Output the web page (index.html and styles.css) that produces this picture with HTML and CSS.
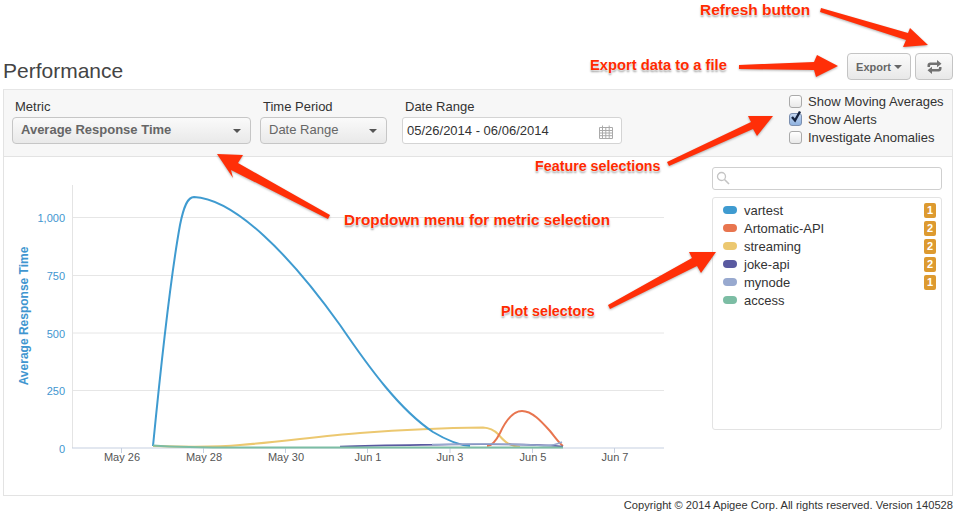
FILE: index.html
```html
<!DOCTYPE html>
<html lang="en">
<head>
  <meta charset="UTF-8">
  <title>Performance</title>
  <link rel="stylesheet" href="styles.css">
</head>
<body>
  <div class="page">
    <div class="header">
      <h1>Performance</h1>
      <div class="actions">
        <button class="btn export">Export <span class="caret small"></span></button>
        <button class="btn refresh">
          <svg width="15" height="14" viewBox="0 0 15 14"><path d="M0.5 7V5.2C0.5 3.6 1.7 2.5 3.2 2.5H10V0L14.5 3.7L10 7.2V5H4.2C3.4 5 3 5.4 3 6.2V7ZM14.5 7V8.8C14.5 10.4 13.3 11.5 11.8 11.5H5V14L0.5 10.3L5 6.8V9H10.8C11.6 9 12 8.6 12 7.8V7Z" fill="#707070"/></svg>
        </button>
      </div>
    </div>

    <div class="panel">
      <div class="toolbar">
        <div class="field metric">
          <label>Metric</label>
          <div class="select strong">Average Response Time <span class="caret"></span></div>
        </div>
        <div class="field period">
          <label>Time Period</label>
          <div class="select">Date Range <span class="caret"></span></div>
        </div>
        <div class="field range">
          <label>Date Range</label>
          <div class="dateinput">05/26/2014 - 06/06/2014
            <svg width="14" height="14" viewBox="0 0 14 14"><path d="M0.5 2.5H13.5V13.5H0.5ZM0.5 5.5H13.5M0.5 8H13.5M0.5 10.7H13.5M3.5 2.5V13.5M6.8 2.5V13.5M10.2 2.5V13.5M3.5 0.5V2.5M10.2 0.5V2.5" fill="none" stroke="#aaa"/></svg>
          </div>
        </div>
        <div class="features">
          <div class="feature"><span class="check"></span>Show Moving Averages</div>
          <div class="feature"><span class="check on"><svg width="14" height="15" viewBox="0 0 14 15"><path d="M3 7L6 10.5L11 1.5" fill="none" stroke="#14233f" stroke-width="2.4"/></svg></span>Show Alerts</div>
          <div class="feature"><span class="check"></span>Investigate Anomalies</div>
        </div>
      </div>

      <div class="content">
        <svg class="chart" width="704" height="338" viewBox="4 157 704 338">
          <g class="grid">
            <path d="M72 217.5H664M72 275.5H664M72 333H664M72 390.5H664"/>
          </g>
          <path class="axis-y" d="M72.5 185V448"/>
          <path class="axis-x" d="M72 448H664M121.5 448V453M203.5 448V453M285.5 448V453M367.5 448V453M450 448V453M532.5 448V453M614.5 448V453"/>
          <g class="ylabels">
            <text x="65" y="222">1,000</text>
            <text x="65" y="280">750</text>
            <text x="65" y="338">500</text>
            <text x="65" y="395">250</text>
            <text x="65" y="453">0</text>
          </g>
          <text class="ytitle" transform="translate(28 316) rotate(-90)">Average Response Time</text>
          <g class="xlabels">
            <text x="122" y="461">May 26</text>
            <text x="204" y="461">May 28</text>
            <text x="286" y="461">May 30</text>
            <text x="368" y="461">Jun 1</text>
            <text x="450" y="461">Jun 3</text>
            <text x="533" y="461">Jun 5</text>
            <text x="615" y="461">Jun 7</text>
          </g>
          <path class="line" stroke="#ecc870" d="M153 446C190 447 220 447 240 445C280 442 320 436 360 433C400 430 440 428 483 427.5C490 428 494 430 498 434C503 440 508 446 520 447"/>
          <path class="line" stroke="#3f9bd0" d="M153 446C160 375 170 280 180 225C184 205 188 197 194 197C235 199 290 255 340 325C370 369 400 410 433 432C448 441 458 445 470 446"/>
          <path class="line" stroke="#e8754f" d="M487 446C492 446 496 441 500 433C506 420 514 411 522 411C532 411 541 421 550 431C555 437 559 443 563 446"/>
          <path class="line thin" stroke="#5a5aa0" d="M340 446.5C380 445 420 445 450 444.5C490 444 530 444 563 446.5"/>
          <path class="line thin" stroke="#98a9cf" d="M432 444.5C470 443.5 520 444 540 445.5C550 446 556 445 562 442"/>
          <path class="line" stroke="#7cbda4" d="M153 445.5C175 447 200 447.5 240 447.5H563"/>
        </svg>

        <div class="side">
          <div class="search">
            <svg width="14" height="14" viewBox="0 0 14 14"><circle cx="5.5" cy="5.5" r="4" fill="none" stroke="#c4c4c4" stroke-width="1.3"/><path d="M8.5 8.5L13 13" stroke="#c4c4c4" stroke-width="1.6"/></svg>
          </div>
          <ul class="plots">
            <li><span class="swatch blue"></span>vartest<span class="badge">1</span></li>
            <li><span class="swatch orange"></span>Artomatic-API<span class="badge">2</span></li>
            <li><span class="swatch yellow"></span>streaming<span class="badge">2</span></li>
            <li><span class="swatch purple"></span>joke-api<span class="badge">2</span></li>
            <li><span class="swatch steel"></span>mynode<span class="badge">1</span></li>
            <li><span class="swatch green"></span>access</li>
          </ul>
        </div>
      </div>
    </div>

    <div class="footer">Copyright © 2014 Apigee Corp. All rights reserved. Version 140528</div>
  </div>

  <!-- notes drawn on top of the screenshot -->
  <svg class="arrows" width="966" height="520" viewBox="0 0 966 520">
    <polygon points="821,8 908,33 910,28 928,45 903,47 906,40 820,12"/>
    <polygon points="739,65 814,62 817,55 838,66 816,77 814,70 739,69"/>
    <polygon points="667,162 751,122 748,116 773,116 757,136 753,129 669,166"/>
    <polygon points="217,154 243,155 238,163 330,215 328,219 231,170 233,178"/>
    <polygon points="716,252 701,273 697,266 610,309 608,305 692,258 689,252"/>
  </svg>
  <div class="note n-refresh">Refresh button</div>
  <div class="note n-export">Export data to a file</div>
  <div class="note n-feature">Feature selections</div>
  <div class="note n-metric">Dropdown menu for metric selection</div>
  <div class="note n-plot">Plot selectors</div>
</body>
</html>
```

FILE: styles.css
```css
body {
  margin: 0;
  font-family: "Liberation Sans", Arial, sans-serif;
  font-size: 13px;
  color: #333;
  background: #fff;
}
.page {
  width: 950px;
  margin-left: 3px;
}
.header {
  height: 89px;
  display: flex;
  justify-content: space-between;
  align-items: flex-end;
}
h1 {
  margin: 0 0 5px 0;
  font-size: 21px;
  font-weight: normal;
  line-height: 26px;
  color: #444;
}
.actions {
  display: flex;
  gap: 4px;
  margin-bottom: 9px;
}
.btn {
  height: 27px;
  padding: 0;
  border: 1px solid #c4c4c4;
  border-radius: 4px;
  background: linear-gradient(#fbfbfb, #e8e8e8);
  font-family: inherit;
  font-size: 11px;
  font-weight: bold;
  color: #666;
}
.export {
  width: 64px;
}
.refresh {
  width: 38px;
}
.refresh svg {
  display: block;
  margin: auto;
}
.caret {
  position: absolute;
  right: 9px;
  top: 11px;
  border-left: 4px solid transparent;
  border-right: 4px solid transparent;
  border-top: 4px solid #555;
}
.caret.small {
  position: static;
  display: inline-block;
  vertical-align: 2px;
  border-top-color: #666;
}
.panel {
  height: 405px;
  border: 1px solid #e3e3e3;
  border-top-color: #e6e6e6;
}
.toolbar {
  height: 66px;
  display: flex;
  background: #f7f7f7;
  border-bottom: 1px solid #e3e3e3;
  box-sizing: content-box;
}
.field label {
  display: block;
  margin: 9px 0 3px 3px;
  line-height: 15px;
  font-size: 13px;
}
.metric {
  width: 239px;
  margin-left: 8px;
}
.period {
  width: 127px;
  margin-left: 9px;
}
.range {
  width: 220px;
  margin-left: 15px;
}
.select {
  position: relative;
  height: 27px;
  box-sizing: border-box;
  border: 1px solid #c6c6c6;
  border-radius: 4px;
  background: linear-gradient(#fafafa, #e9e9e9);
  padding-left: 8px;
  line-height: 24px;
  color: #666;
}
.strong {
  font-weight: bold;
}
.dateinput {
  position: relative;
  height: 27px;
  box-sizing: border-box;
  border: 1px solid #d4d4d4;
  border-radius: 3px;
  background: #fff;
  padding-left: 4px;
  line-height: 25px;
}
.dateinput svg {
  position: absolute;
  right: 8px;
  top: 7px;
}
.features {
  margin-left: 167px;
  padding-top: 2px;
}
.feature {
  display: flex;
  align-items: center;
  height: 18px;
  font-size: 13px;
  white-space: nowrap;
}
.check {
  position: relative;
  box-sizing: border-box;
  width: 13px;
  height: 13px;
  margin-right: 6px;
  border: 1px solid #aaa;
  border-radius: 3px;
  background: linear-gradient(#fff, #e9e9e9);
}
.check.on {
  background: linear-gradient(#c3d6f0, #8fb2e0);
  border-color: #7b8fb0;
}
.check svg {
  position: absolute;
  left: -1px;
  top: -4px;
}
.content {
  display: flex;
}
.chart {
  display: block;
  flex: none;
}
.grid path {
  stroke: #e6e6e6;
  fill: none;
}
.axis-y {
  stroke: #e4e4e4;
  fill: none;
}
.axis-x {
  stroke: #c5cfe0;
  fill: none;
}
.ylabels text {
  font-size: 11px;
  fill: #3f96d0;
  text-anchor: end;
}
.ytitle {
  font-size: 12px;
  font-weight: bold;
  fill: #3f96d0;
  text-anchor: middle;
}
.xlabels text {
  font-size: 11px;
  fill: #555;
  text-anchor: middle;
}
.line {
  fill: none;
  stroke-width: 2;
}
.thin {
  stroke-width: 1.6;
}
.side {
  width: 230px;
  margin-left: 4px;
  padding-top: 10px;
}
.search {
  height: 23px;
  box-sizing: border-box;
  border: 1px solid #cfcfcf;
  border-radius: 3px;
  padding: 3px 0 0 3px;
}
.search svg {
  display: block;
}
.plots {
  list-style: none;
  height: 233px;
  box-sizing: border-box;
  margin: 7px 0 0 0;
  padding: 3px 5px 0 10px;
  border: 1px solid #e3e3e3;
  border-radius: 3px;
}
.plots li {
  display: flex;
  align-items: center;
  height: 18px;
  font-size: 13px;
}
.swatch {
  width: 14px;
  height: 8px;
  margin-right: 7px;
  border-radius: 4px;
}
.blue { background: #3f9bd0; }
.orange { background: #e8754f; }
.yellow { background: #ecc870; }
.purple { background: #5a5aa0; }
.steel { background: #98a9cf; }
.green { background: #7cbda4; }
.badge {
  width: 12px;
  height: 15px;
  margin-left: auto;
  border-radius: 2px;
  background: #dd9a2f;
  color: #fff;
  font-size: 11px;
  font-weight: bold;
  line-height: 15px;
  text-align: center;
}
.footer {
  margin-top: 2px;
  text-align: right;
  font-size: 11.14px;
  line-height: 14px;
  color: #333;
}
.arrows {
  position: absolute;
  left: 0;
  top: 0;
  filter: drop-shadow(0 1px 1px rgba(0, 0, 0, 0.3));
}
.arrows polygon {
  fill: #ff2f08;
}
.note {
  position: absolute;
  font-weight: bold;
  line-height: 18px;
  color: #ff2a00;
  white-space: nowrap;
  text-shadow: 0 0 2px #fff, 0 0 2px #fff, 0 2px 2px rgba(0, 0, 0, 0.4);
}
.n-refresh { left: 700px; top: 1px; font-size: 15.5px; }
.n-export { left: 590px; top: 56px; font-size: 14.75px; }
.n-feature { left: 535px; top: 157px; font-size: 14.3px; }
.n-metric { left: 344px; top: 211px; font-size: 15.3px; }
.n-plot { left: 501px; top: 302px; font-size: 14.3px; }
```
